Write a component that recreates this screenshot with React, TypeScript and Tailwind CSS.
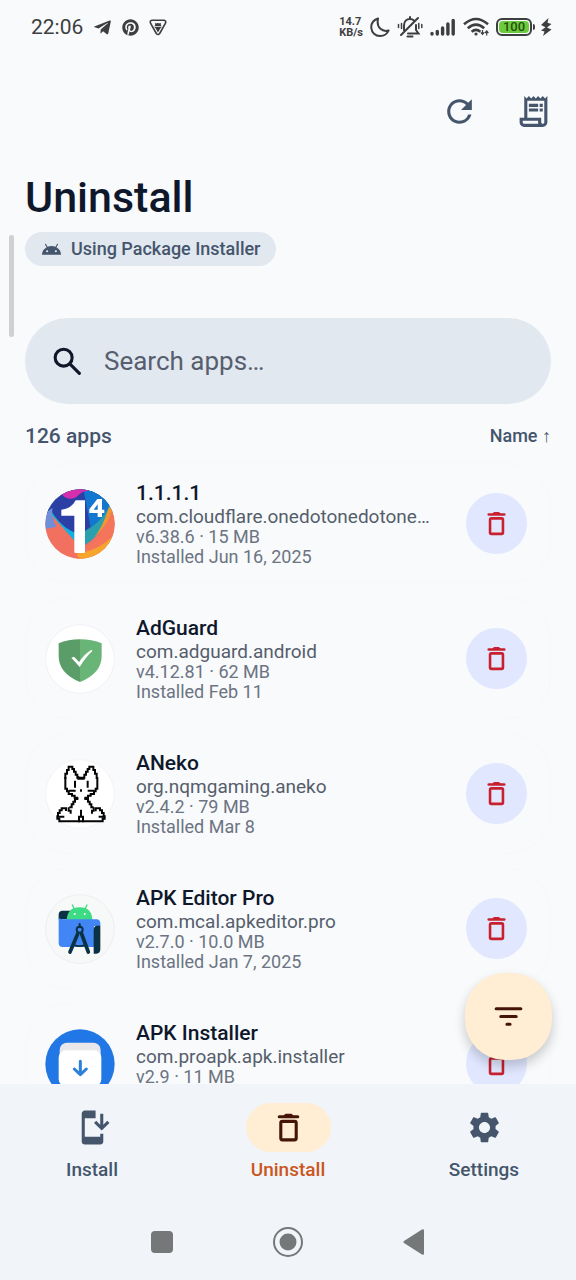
import { useState } from "react";
import type { ComponentType, ReactNode } from "react";
import { FaPinterest, FaTelegramPlane } from "react-icons/fa";
import {
  MdAndroid,
  MdInstallMobile,
  MdOutlineReceiptLong,
  MdRefresh,
  MdSettings,
} from "react-icons/md";

type IconProps = { className?: string };

function TrashIcon({ className }: IconProps) {
  return (
    <svg viewBox="0 0 24 24" className={className} fill="none" stroke="currentColor" strokeWidth={2} aria-hidden>
      <rect x="7" y="8" width="10" height="12" rx="1" />
      <path d="M6 5h12" strokeLinecap="round" />
      <path d="M8.6 4.6 9.8 3.2q.2-.2.5-.2h3.4q.3 0 .5.2l1.2 1.4z" fill="currentColor" stroke="none" />
    </svg>
  );
}

function SearchIcon({ className }: IconProps) {
  return (
    <svg viewBox="0 0 24 24" className={className} fill="none" stroke="currentColor" strokeWidth={2} strokeLinecap="round" aria-hidden>
      <circle cx="9.5" cy="9.5" r="5.5" />
      <path d="m14 14 5.7 5.7" />
    </svg>
  );
}

function FilterIcon({ className }: IconProps) {
  return (
    <svg viewBox="0 0 24 24" className={className} stroke="currentColor" strokeWidth={2} strokeLinecap="round" aria-hidden>
      <path d="M4 7h16M7 12h10M11 17h2" />
    </svg>
  );
}

/* ---------- launcher icons ---------- */

function CloudflareIcon() {
  return (
    <svg viewBox="45 52 210 210" className="size-full" aria-hidden>
      <clipPath id="cf-clip">
        <circle cx="150" cy="157" r="104" />
      </clipPath>
      <g clipPath="url(#cf-clip)">
        <rect x="45" y="52" width="210" height="210" fill="#f2705f" />
        <path d="M45 110 60 125 140 215Q210 190 240 105L255 90V52H45z" fill="#12b0dc" />
        <path d="M150 52h105v55Q215 190 165 220z" fill="#2a9fae" />
        <path d="M45 52h170l25 45Q215 150 150 188 100 175 65 120L45 130z" fill="#2b3fa5" />
        <path d="M160 52h60l22 42q-18 44-60 74z" fill="#1477cf" />
        <path d="M45 125 68 108Q62 140 80 165L45 172z" fill="#6f8fd8" />
        <path d="M255 95Q235 130 225 160 205 215 140 240L130 262H255z" fill="#f4745c" />
        <path d="M255 185Q215 235 140 246L150 265H255z" fill="#f6a52c" />
        <path d="M237 105q-20 65-45 92 35-25 55-82z" fill="#f0972f" />
        <path d="M95 52Q92 78 118 81 135 83 150 66 160 56 175 58V45H95z" fill="#d52fae" />
      </g>
      <path d="M165 86v155q0 3-3 3h-26q-3 0-3-3V132H94v-18q30-2 43-28z" fill="#fff" />
      <path d="M202 82h14v32h7v10h-7v12h-13v-12h-25v-11zm1 16-12 16h12z" fill="#fff" />
    </svg>
  );
}

function AdGuardIcon() {
  return (
    <svg viewBox="45 39 210 210" className="size-full" aria-hidden>
      <circle cx="150" cy="144" r="103" fill="#fff" stroke="#eff1f4" strokeWidth="3" />
      <path d="M150 85q-36 0-64 12v38q0 52 64 78z" fill="#5b9d68" />
      <path d="M150 85q36 0 65 12v38q0 52-65 78z" fill="#69b578" />
      <path d="m124 140 8-3 15 16q18-26 38-37l2 4q-20 18-38 48z" fill="#fff" />
    </svg>
  );
}

function NekoIcon() {
  return (
    <svg viewBox="45 40 210 210" className="size-full" aria-hidden>
      <circle cx="150" cy="145" r="103" fill="#fff" stroke="#f2f4f7" strokeWidth="3" />
      <g fill="none" stroke="#050505" strokeWidth="6" strokeLinecap="square">
        <path d="M106 97V84h5V73h5V63h11v7h5v8h5v9h5v9h21v-9h5v-9h5v-8h5v-7h12v10h5v11h5v13" />
        <path d="M106 97v32h5v8h5v8h10v5h8v6h8M202 97v32h-5v8h-5v8h-10v5h-8v6h-8" />
        <path d="M135 108v15M173 108v15M119 135h15M176 135h14M153 134v1M145 95v4h16" />
        <path d="M142 160h-7v8h-5v8h-5v9h-4M166 160h8v8h5v8h5v9h4" />
        <path d="M108 193v-5H95v6h-6v8h-5v10h-2v7h6v8h130v-8h6v-7h-3v-10h-5v-8h-6v-6h-13v6" />
        <path d="M85 213h15M209 213h13M116 188v7h6v6M191 188v7h-5v6M153 195v18h-6v14M153 213h6v14" />
      </g>
    </svg>
  );
}

function ApkEditorIcon() {
  return (
    <svg viewBox="45 42 210 210" className="size-full" aria-hidden>
      <circle cx="150" cy="147" r="103" fill="#f7f8f8" stroke="#eceef0" strokeWidth="3" />
      <path d="M98 92h30v26H86v-14q0-12 12-12z" fill="#0b3244" />
      <path d="m127 75 6 12M171 75l-6 12" stroke="#3ddc84" strokeWidth="4" strokeLinecap="round" />
      <path d="M110 120q2-38 39-38t38 38z" fill="#3ddc84" />
      <circle cx="134" cy="102" r="3" fill="#fff" />
      <circle cx="164" cy="102" r="3" fill="#fff" />
      <path d="M86 112q2 6 12 6h102q10 0 11 12v8h-19v63H98q-12 0-12-12z" fill="#4285f4" />
      <path d="M199 137h12v70q0 14-12 14h-8v-70q0-12 8-14z" fill="#0b3244" />
      <g fill="none" stroke="#0b3244" strokeLinecap="round">
        <circle cx="149" cy="149" r="9" strokeWidth="6" />
        <path d="M149 132v8" strokeWidth="6" />
        <path d="m143 162-23 54M155 162l20 54" strokeWidth="11" />
        <path d="M131 194q18 9 35 0" strokeWidth="5" />
      </g>
    </svg>
  );
}

function ApkInstallerIcon() {
  return (
    <svg viewBox="45 60 210 210" className="size-full" aria-hidden>
      <circle cx="150" cy="165" r="104" fill="#2277e6" />
      <rect x="89" y="101" width="123" height="80" rx="22" fill="#e9e7ea" />
      <rect x="86" y="124" width="128" height="108" rx="22" fill="#fff" />
      <path d="M151 157v39M133 180l18 17 18-17" fill="none" stroke="#2d80d8" strokeWidth="9" strokeLinecap="round" strokeLinejoin="round" />
    </svg>
  );
}

interface AppEntry {
  name: string;
  pkg: string;
  meta: string;
  installed: string;
  Icon: ComponentType;
}

const APPS: AppEntry[] = [
  { name: "1.1.1.1", pkg: "com.cloudflare.onedotonedotone…", meta: "v6.38.6 · 15 MB", installed: "Installed Jun 16, 2025", Icon: CloudflareIcon },
  { name: "AdGuard", pkg: "com.adguard.android", meta: "v4.12.81 · 62 MB", installed: "Installed Feb 11", Icon: AdGuardIcon },
  { name: "ANeko", pkg: "org.nqmgaming.aneko", meta: "v2.4.2 · 79 MB", installed: "Installed Mar 8", Icon: NekoIcon },
  { name: "APK Editor Pro", pkg: "com.mcal.apkeditor.pro", meta: "v2.7.0 · 10.0 MB", installed: "Installed Jan 7, 2025", Icon: ApkEditorIcon },
  { name: "APK Installer", pkg: "com.proapk.apk.installer", meta: "v2.9 · 11 MB", installed: "", Icon: ApkInstallerIcon },
];

function StatusBar() {
  return (
    <div className="flex h-[54px] shrink-0 items-center justify-between pr-6 pl-[31px] text-[#3c3e40]">
      <div className="flex items-center gap-[10px]">
        <span className="text-[21px] leading-6">22:06</span>
        <FaTelegramPlane className="size-[19px]" />
        <FaPinterest className="size-[17px]" />
        <svg viewBox="0 0 18 17" className="h-[17px] w-[18px]" aria-hidden>
          <path d="M3 1.2h12q2.3.5 1.6 2.8L10.7 14.5q-1.7 2-3.4 0L1.4 4Q.7 1.7 3 1.2z" fill="none" stroke="currentColor" strokeWidth="1.6" />
          <path d="m5.8 3.5 1 1q2.2-1 4.4 0l1-1-.4 2 .6 1.500H5.600l.6-1.500zM5 7.800h8l-1.600 1.500L9 13.500 6.600 9.300z" fill="currentColor" />
        </svg>
      </div>
      <div className="flex items-center gap-[7px]">
        <div className="flex flex-col text-[11px] leading-[11px] font-bold">
          <span>14.7</span>
          <span>KB/s</span>
        </div>
        <svg viewBox="0 0 20 20" className="size-5" fill="none" stroke="currentColor" strokeWidth="2" strokeLinejoin="round" aria-hidden>
          <path d="M8 1.500C3.500 3 1 6.500 1.300 11c.4 4.600 4 8 8.700 8 4 0 7.200-2 8.600-5.500C13 15 6 11.500 8 1.500z" />
        </svg>
        <svg viewBox="0 0 26 22" className="h-[22px] w-[26px]" fill="none" stroke="currentColor" strokeWidth="2" strokeLinecap="round" aria-hidden>
          <path d="M7 14.500V9.500c0-4 2.500-6.500 6-6.500 1.500 0 3 .5 4 1.500M19 9v5l2.500 3.500H11M10.500 20.500h5M21 2 4 19M13 1v1" />
          <path d="M4.500 7.500v5M1.500 8.500v3M21.800 7.500v5M24.800 8.500v3" strokeWidth="1.500" />
        </svg>
        <svg viewBox="0 0 26 18" className="h-[18px] w-[26px]" stroke="currentColor" strokeWidth="3.400" strokeLinecap="round" aria-hidden>
          <path d="M2 15.500v.5M7.300 13.500V16M12.600 10v6M17.900 6v10M23.200 2.500V16" />
        </svg>
        <svg viewBox="0 0 26 20" className="h-5 w-[26px]" fill="none" stroke="currentColor" strokeWidth="2.600" aria-hidden>
          <path d="M1 7.200q12-10.400 24 0M4.800 11.200q8.200-7.200 16.400 0M8.600 14.800q4.400-3.800 8.800 0" />
          <circle cx="13" cy="17" r="1.600" fill="currentColor" stroke="none" />
          <path d="M19.500 13v4M17.800 15.300l1.700 2 1.700-2M23.700 18.500v-4M22 16l1.700-2 1.700 2" strokeWidth="1.200" />
        </svg>
        <div className="flex items-center gap-px">
          <div className="flex h-[18px] w-9 rounded-md border-2 border-current p-px">
            <div className="flex flex-1 items-center justify-center rounded-sm bg-[#6ccb3c] text-[13px] leading-3 font-medium text-[#26500f]">
              100
            </div>
          </div>
          <div className="h-1.5 w-0.5 rounded-r bg-current" />
          <svg viewBox="0 0 12 18" className="ml-1 h-[18px] w-3" fill="currentColor" aria-hidden>
            <path d="M8.500 0 1 7l4.500 2.200L1 12.500l3.500 1L3 18l8.500-6.500L7 9.500 11.500 6 7.500 4.800z" />
          </svg>
        </div>
      </div>
    </div>
  );
}

function IconButton({ label, children }: { label: string; children: ReactNode }) {
  return (
    <button type="button" aria-label={label} className="flex size-[74px] items-center justify-center text-slate-600">
      {children}
    </button>
  );
}

function AppCard({ name, pkg, meta, installed, Icon }: AppEntry) {
  return (
    <li className="flex items-center rounded-[43px] border border-[#f6f8fa] py-4 pr-[23px] pl-[19px]">
      <div className="size-[70px] shrink-0">
        <Icon />
      </div>
      <div className="ml-[21px] min-w-0 flex-1 pr-4">
        <h2 className="h-[26px] truncate text-[21px] leading-[26px] font-medium text-slate-900">{name}</h2>
        <p className="h-[21px] truncate text-[19px] leading-[21px] text-[#565e6b]">{pkg}</p>
        <p className="h-5 text-[18px] leading-5 text-[#6c7482]">{meta}</p>
        <p className="h-5 text-[18px] leading-5 text-[#6c7482]">{installed}</p>
      </div>
      <button
        type="button"
        aria-label={`Uninstall ${name}`}
        className="flex size-[61px] shrink-0 items-center justify-center rounded-full bg-indigo-100 text-[#c8202f]"
      >
        <TrashIcon className="size-[31px]" />
      </button>
    </li>
  );
}

const TABS = [
  { label: "Install", Icon: MdInstallMobile },
  { label: "Uninstall", Icon: TrashIcon },
  { label: "Settings", Icon: MdSettings },
];

function BottomNav() {
  const [tab, setTab] = useState("Uninstall");
  return (
    <nav className="flex gap-3 pt-[19px]">
      {TABS.map(({ label, Icon }) => {
        const active = label === tab;
        return (
          <button
            key={label}
            type="button"
            aria-current={active ? "page" : undefined}
            onClick={() => setTab(label)}
            className="flex flex-1 flex-col items-center gap-1.5"
          >
            <span
              className={
                active
                  ? "flex h-[49px] w-[85px] items-center justify-center rounded-full bg-orange-100 text-[#431407]"
                  : "flex h-[49px] w-[85px] items-center justify-center rounded-full text-slate-600"
              }
            >
              <Icon className="size-[37px]" />
            </span>
            <span className={active ? "text-[19px] leading-6 font-medium text-[#cb5520]" : "text-[19px] leading-6 font-medium text-slate-600"}>
              {label}
            </span>
          </button>
        );
      })}
    </nav>
  );
}

function SystemNav() {
  return (
    <div className="flex h-[77px] items-center justify-center gap-[94px] text-[#757779]">
      <button type="button" aria-label="Recents">
        <svg viewBox="0 0 32 32" className="size-8" fill="currentColor" aria-hidden>
          <rect x="5" y="5" width="22" height="22" rx="4" />
        </svg>
      </button>
      <button type="button" aria-label="Home">
        <svg viewBox="0 0 32 32" className="size-8" fill="currentColor" aria-hidden>
          <circle cx="16" cy="16" r="14" fill="none" stroke="currentColor" strokeWidth="2" />
          <circle cx="16" cy="16" r="8.500" />
        </svg>
      </button>
      <button type="button" aria-label="Back">
        <svg viewBox="0 0 32 32" className="size-8" fill="currentColor" aria-hidden>
          <path d="M24 3.500q2-1 2 1v23q0 2-2 1L6 17q-1.500-1 0-2z" />
        </svg>
      </button>
    </div>
  );
}

export default function App() {
  const [query, setQuery] = useState("");
  const shown = APPS.filter((a) => a.name.toLowerCase().includes(query.toLowerCase()));

  return (
    <div className="flex h-dvh flex-col overflow-hidden bg-slate-50 font-['Roboto',sans-serif] text-slate-900">
      <StatusBar />
      <div className="relative min-h-0 flex-1">
        <div className="h-full overflow-y-auto px-[25px] [scrollbar-width:none]">
          <header>
            <div className="-mr-[19px] flex justify-end pt-5">
              <IconButton label="Refresh">
                <MdRefresh className="size-[37px]" />
              </IconButton>
              <IconButton label="Uninstall log">
                <MdOutlineReceiptLong className="size-[37px]" />
              </IconButton>
            </div>
            <h1 className="mt-[21px] text-[43px] leading-[56px] font-medium">Uninstall</h1>
            <div className="mt-[7px] flex h-[34px] w-fit items-center gap-[9px] rounded-full bg-slate-200 px-4 text-[18px] leading-6 font-medium text-slate-600">
              <MdAndroid className="size-[21px]" />
              Using Package Installer
            </div>
          </header>

          <label className="mt-[52px] flex h-[86px] items-center gap-[18px] rounded-full bg-slate-200 pl-6">
            <SearchIcon className="size-[37px] shrink-0" />
            <input
              type="text"
              aria-label="Search apps"
              placeholder="Search apps…"
              value={query}
              onChange={(e) => setQuery(e.target.value)}
              className="min-w-0 flex-1 bg-transparent text-[26px] leading-8 text-slate-900 outline-none placeholder:text-[#565f6e]"
            />
          </label>

          <div className="flex h-[59px] items-center justify-between pt-1 font-medium text-slate-600">
            <p className="text-[21px] leading-7">126 apps</p>
            <button type="button" className="text-[18px] leading-6">
              Name ↑
            </button>
          </div>

          <ul className="flex flex-col gap-[14px]">
            {shown.map((app) => (
              <AppCard key={app.pkg} {...app} />
            ))}
          </ul>
        </div>

        <div className="absolute top-[181px] left-[9px] h-[102px] w-[5px] rounded-full bg-[#cfd0d2]" />
        <button
          type="button"
          aria-label="Sort and filter"
          className="absolute right-6 bottom-6 flex size-[87px] items-center justify-center rounded-[40px] bg-orange-100 text-[#431407] shadow-[0_6px_12px_rgba(0,0,0,0.2)]"
        >
          <FilterIcon className="size-[37px]" />
        </button>
      </div>
      <footer className="flex shrink-0 flex-col gap-[21px] bg-slate-100">
        <BottomNav />
        <SystemNav />
      </footer>
    </div>
  );
}
